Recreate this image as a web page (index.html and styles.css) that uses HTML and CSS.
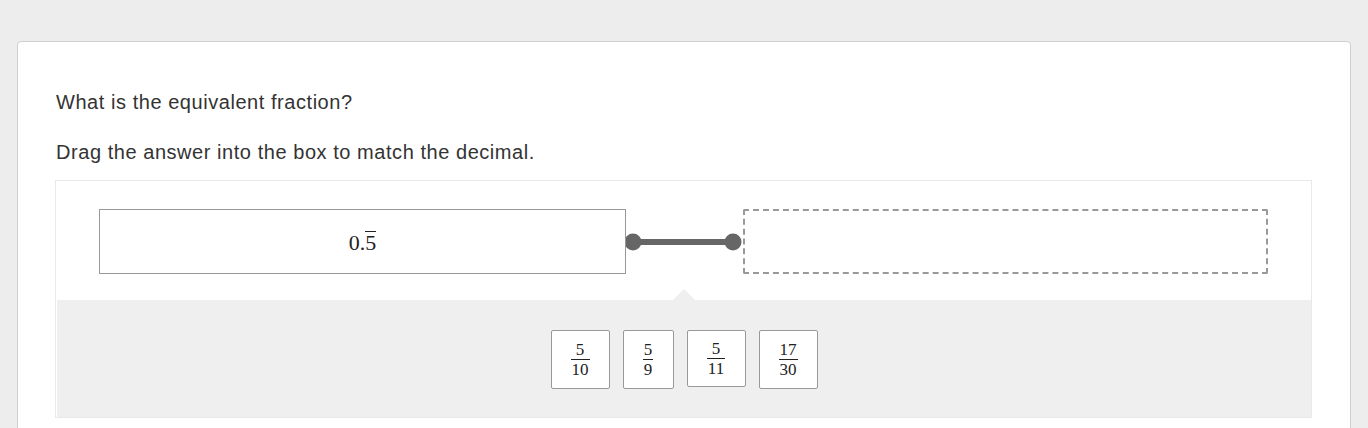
FILE: index.html
```html
<!DOCTYPE html>
<html>
<head>
<meta charset="utf-8">
<link rel="stylesheet" href="styles.css">
</head>
<body>
<div class="card">
  <p class="prompt first">What is the equivalent fraction?</p>
  <p class="prompt">Drag the answer into the box to match the decimal.</p>
  <div class="panel">
    <div class="match-row">
      <div class="source"><span class="math">0.<span class="ovl">5</span></span></div>
      <svg class="connector" width="117" height="64" viewBox="0 0 117 64">
        <line x1="7" y1="32" x2="107" y2="32" stroke="#666" stroke-width="6"/>
        <circle cx="7" cy="32" r="8.5" fill="#666"/>
        <circle cx="107" cy="32" r="8.5" fill="#666"/>
      </svg>
      <div class="target"></div>
    </div>
    <div class="tray">
      <div class="tile"><span class="frac"><span class="num">5</span><span class="den">10</span></span></div>
      <div class="tile narrow"><span class="frac"><span class="num">5</span><span class="den">9</span></span></div>
      <div class="tile short"><span class="frac"><span class="num">5</span><span class="den">11</span></span></div>
      <div class="tile"><span class="frac"><span class="num">17</span><span class="den">30</span></span></div>
    </div>
  </div>
</div>
</body>
</html>
```

FILE: styles.css
```css
html, body {
  margin: 0;
  padding: 0;
  background: #ededed;
}
body {
  font-family: "Liberation Sans", Arial, sans-serif;
  color: #333;
  height: 428px;
  overflow: hidden;
}
.card {
  margin: 41px 0 0 17px;
  width: 1334px;
  box-sizing: border-box;
  background: #fff;
  border: 1px solid #cfcfcf;
  border-radius: 4px;
  padding: 40px 38px 30px 37px;
  min-height: 400px;
}
.prompt {
  font-size: 20px;
  letter-spacing: 0.55px;
  line-height: 22px;
  margin: 0 0 28px 1px;
}
.prompt.first {
  margin-top: 9px;
}
.panel {
  border: 1px solid #e9e9e9;
  margin-top: -11px;
}
.match-row {
  display: flex;
  align-items: center;
  padding: 28px 43px 26px;
}
.source, .target {
  height: 65px;
  box-sizing: border-box;
}
.source {
  width: 527px;
  flex: none;
  border: 1px solid #999;
  display: flex;
  align-items: center;
  justify-content: center;
}
.target {
  flex: 1;
  border: 2px dashed #999;
  border-radius: 2px;
}
.connector {
  display: block;
  flex: none;
}
.math {
  font-family: "Liberation Serif", "DejaVu Serif", serif;
  font-size: 22px;
  color: #222;
  position: relative;
  top: 1px;
}
.ovl {
  display: inline-block;
  border-top: 1px solid #222;
  line-height: 19px;
  padding-top: 1px;
}
.tray {
  position: relative;
  background: #efefef;
  margin: 0 0 0 1px;
  padding: 30px 0 28px;
  display: flex;
  justify-content: center;
  align-items: flex-start;
  gap: 13px;
}
.tray::before {
  content: "";
  position: absolute;
  top: -11px;
  left: 50%;
  margin-left: -11px;
  border-left: 11px solid transparent;
  border-right: 11px solid transparent;
  border-bottom: 11px solid #efefef;
}
.tile {
  width: 59px;
  height: 59px;
  box-sizing: border-box;
  background: #fff;
  border: 1px solid #999;
  border-radius: 2px;
  display: flex;
  align-items: center;
  justify-content: center;
}
.tile.narrow {
  width: 51px;
}
.tile.short {
  height: 57px;
}
.frac {
  display: inline-flex;
  flex-direction: column;
  align-items: center;
  font-family: "Liberation Serif", "DejaVu Serif", serif;
  font-size: 17px;
  line-height: 15px;
  color: #222;
}
.num {
  padding: 0 1px 2px;
  border-bottom: 1px solid #222;
  align-self: stretch;
  text-align: center;
}
.den {
  padding: 2px 1px 0;
}
```
